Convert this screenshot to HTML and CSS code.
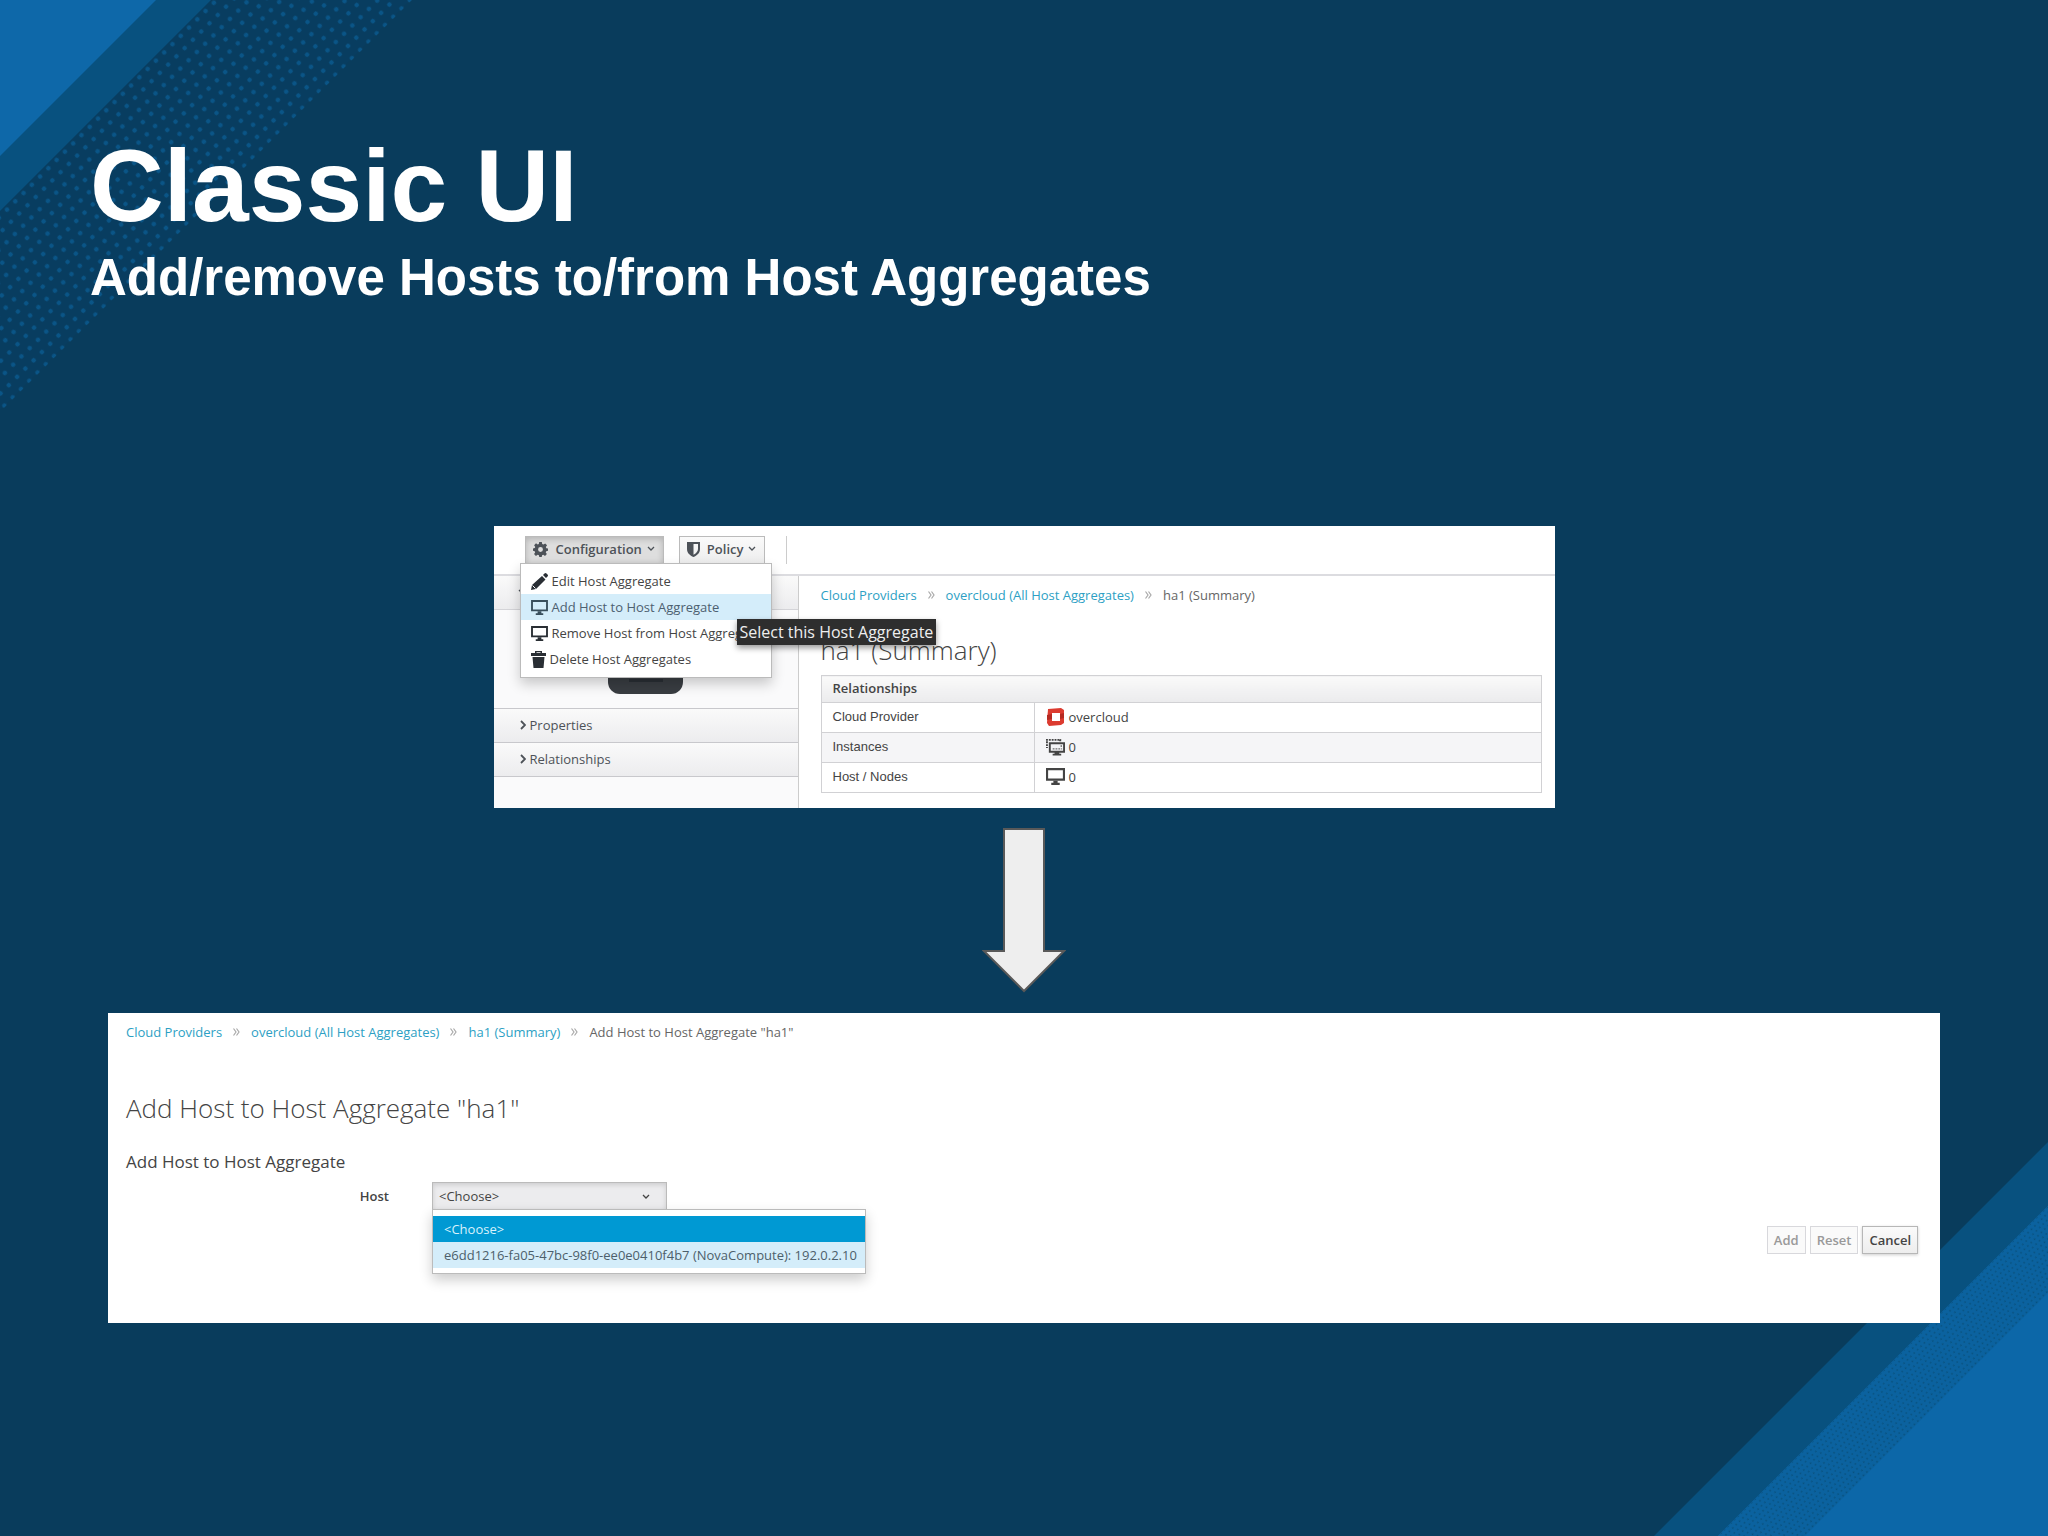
FILE: index.html
```html
<!DOCTYPE html>
<html lang="en">
<head>
<meta charset="utf-8">
<title>Classic UI</title>
<link rel="stylesheet" href="styles.css">
</head>
<body>
<svg class="defs" width="0" height="0" aria-hidden="true">
  <defs>
    <symbol id="screen" viewBox="0 0 18 16"><path fill-rule="evenodd" d="M0 0h18v12H0zM2 2v8h14V2z"/><path d="M7 12h4v2h2v2H5v-2h2z"/></symbol>
    <symbol id="down" viewBox="0 0 8 6"><path d="M1 1l3 3 3-3" fill="none" stroke="currentColor" stroke-width="1.3"/></symbol>
    <symbol id="right" viewBox="0 0 6 10"><path d="M1 1l4 4-4 4" fill="none" stroke="currentColor" stroke-width="1.8"/></symbol>
    <symbol id="sep" viewBox="0 0 7 8"><path d="M.5.5L3 4 .5 7.500M3.500.5L6 4 3.500 7.500" fill="none" stroke="currentColor" stroke-width="1.200"/></symbol>
  </defs>
</svg>
<main class="slide">
  <svg class="corner corner-top" width="420" height="420" viewBox="0 0 420 420" aria-hidden="true">
    <defs>
      <pattern id="dots" width="11.700" height="22.800" patternUnits="userSpaceOnUse" patternTransform="rotate(-45)">
        <circle cx="3" cy="5" r="2.300" fill="#0a5587"/>
        <circle cx="8.850" cy="16.400" r="2.300" fill="#0a5587"/>
      </pattern>
    </defs>
    <path d="M211 0H410L0 410V211z" fill="#083d60"/>
    <path d="M211 0H412L0 412V211z" fill="url(#dots)"/>
    <path d="M0 0H211L0 211z" fill="#08517f"/>
    <path d="M0 0H156L0 156z" fill="#0e68a9"/>
  </svg>
  <svg class="corner corner-bottom" width="394" height="394" viewBox="0 0 394 394" aria-hidden="true">
    <defs>
      <pattern id="grain" width="4.800" height="9.200" patternUnits="userSpaceOnUse" patternTransform="rotate(-45)">
        <circle cx="1.200" cy="2" r="0.900" fill="#08517f"/>
        <circle cx="3.600" cy="6.600" r="0.900" fill="#08517f"/>
      </pattern>
    </defs>
    <path d="M394 0V394H0z" fill="#08517f"/>
    <path d="M394 64V394H64z" fill="#0c67a8"/>
    <path d="M394 64V151L151 394H64z" fill="#0b629f"/>
    <path d="M394 64V151L151 394H64z" fill="url(#grain)"/>
  </svg>

  <header class="heading">
    <h1>Classic UI</h1>
    <p>Add/remove Hosts to/from Host Aggregates</p>
  </header>

  <section class="card summary">
    <div class="toolbar">
      <div class="menu-holder">
        <button class="tool tool-open" type="button">
          <svg width="15" height="15" viewBox="0 0 16 16" fill="currentColor"><path fill-rule="evenodd" d="M6.600 0h2.800l.4 2.200 1.300.5L13 1.500l2 2-1.300 1.800.5 1.300 1.800.2v2.600l-1.900.4-.5 1.300 1.200 1.800-2 2-1.800-1.200-1.300.5L9.300 16H6.700l-.4-1.900-1.300-.5-1.900 1.300-2-2 1.200-1.800-.5-1.300L0 9.400V6.800l1.900-.3.500-1.300L1.200 3.400l2-2L5 2.700l1.200-.5zM8 5.400a2.600 2.600 0 100 5.200 2.600 2.600 0 000-5.200z"/></svg>
          <span>Configuration</span>
          <svg width="8" height="6"><use href="#down"/></svg>
        </button>
        <ul class="menu">
          <li><button type="button"><svg width="17" height="17" viewBox="0 0 17 17"><path d="M11 3l3.500 3.500L5 16l-5 1 1-5zM12 2l1.500-1.500q1-1 2 0l1 1q1 1 0 2L15 5z"/><path d="M1.500 12.500l3 3" stroke="#fff" stroke-width="1"/></svg>Edit Host Aggregate</button></li>
          <li class="active"><button type="button"><svg width="17" height="15"><use href="#screen"/></svg>Add Host to Host Aggregate</button>
            <span class="tooltip" role="tooltip">Select this Host Aggregate</span></li>
          <li><button type="button"><svg width="17" height="15"><use href="#screen"/></svg>Remove Host from Host Aggregate</button></li>
          <li><button type="button"><svg width="15" height="17" viewBox="0 0 15 17"><path fill-rule="evenodd" d="M4 2V0h7v2h4v3H0V2zM5.500 1.200V2h4v-.8zM1.500 6h12l-1 11h-10z"/></svg>Delete Host Aggregates</button></li>
        </ul>
      </div>
      <button class="tool" type="button">
        <svg width="13" height="15" viewBox="0 0 13 15"><path fill="currentColor" fill-rule="evenodd" d="M0 0h13v7c0 4-3 6.500-6.500 8C3 13.500 0 11 0 7zM6.500 2v10.800C9 11.500 11 9.500 11 7V2z"/></svg>
        <span>Policy</span>
        <svg width="8" height="6"><use href="#down"/></svg>
      </button>
      <span class="divider"></span>
    </div>
    <div class="body">
      <aside class="side">
        <button class="fold" type="button" aria-label="Collapse"><svg width="8" height="6"><use href="#down"/></svg></button>
        <div class="quad"><span class="tile"></span></div>
        <button class="fold" type="button"><svg width="6" height="10"><use href="#right"/></svg>Properties</button>
        <button class="fold last" type="button"><svg width="6" height="10"><use href="#right"/></svg>Relationships</button>
      </aside>
      <div class="detail">
        <nav class="crumbs">
          <a href="#">Cloud Providers</a><svg width="7" height="8"><use href="#sep"/></svg>
          <a href="#">overcloud (All Host Aggregates)</a><svg width="7" height="8"><use href="#sep"/></svg>
          <span>ha1 (Summary)</span>
        </nav>
        <h2>ha1 (Summary)</h2>
        <table>
          <thead><tr><th colspan="2">Relationships</th></tr></thead>
          <tbody>
            <tr><td class="name">Cloud Provider</td><td><div class="value"><svg width="19" height="19" viewBox="0 0 19 19"><path d="M2 2l13-1 3 2v13l-3 2-12 1-2-3z" fill="#dc3b30"/><path d="M1 8l5-1v5l-5 1zM14 7l4-1v5l-4 1z" fill="#b52a22"/><path d="M6 6h8v8H6z" fill="#fff"/></svg>overcloud</div></td></tr>
            <tr class="odd"><td class="name">Instances</td><td><div class="value"><svg width="19" height="18" viewBox="0 0 20 18"><path d="M0 1.500h16M1 3v7M15 1v3" fill="none" stroke="currentColor" stroke-width="2" stroke-dasharray="2 1"/><path fill="currentColor" fill-rule="evenodd" d="M3 4h17v11h-6v1h2v2H7v-2h2v-1H3zM5 6v7h13V6z"/><path d="M7 11h10M16 7v3" stroke="currentColor" stroke-dasharray="2 1"/></svg>0</div></td></tr>
            <tr><td class="name">Host / Nodes</td><td><div class="value"><svg width="19" height="17" fill="currentColor"><use href="#screen"/></svg>0</div></td></tr>
          </tbody>
        </table>
      </div>
    </div>
  </section>

  <svg class="arrow" width="84" height="166" viewBox="0 0 84 166" aria-hidden="true"><path d="M22 1H62V123H82L42 163 2 123H22z" fill="#eee" stroke="#595959" stroke-width="2"/></svg>

  <section class="card editor">
    <nav class="crumbs">
      <a href="#">Cloud Providers</a><svg width="7" height="8"><use href="#sep"/></svg>
      <a href="#">overcloud (All Host Aggregates)</a><svg width="7" height="8"><use href="#sep"/></svg>
      <a href="#">ha1 (Summary)</a><svg width="7" height="8"><use href="#sep"/></svg>
      <span>Add Host to Host Aggregate "ha1"</span>
    </nav>
    <h2>Add Host to Host Aggregate "ha1"</h2>
    <h3>Add Host to Host Aggregate</h3>
    <form>
      <div class="field">
        <label for="host">Host</label>
        <div class="picker">
          <select id="host"><option>&lt;Choose&gt;</option></select>
          <svg class="picker-arrow" width="8" height="6"><use href="#down"/></svg>
          <ul class="options">
            <li class="chosen">&lt;Choose&gt;</li>
            <li class="hover">e6dd1216-fa05-47bc-98f0-ee0e0410f4b7 (NovaCompute): 192.0.2.10</li>
          </ul>
        </div>
      </div>
      <div class="actions">
        <button type="button" disabled>Add</button>
        <button type="button" disabled>Reset</button>
        <button type="button">Cancel</button>
      </div>
    </form>
  </section>
</main>
</body>
</html>
```
FILE: styles.css
```css
* { box-sizing: border-box; }
body { margin: 0; background: #093c5c; }
ul { list-style: none; margin: 0; padding: 0; }
button, select { font: inherit; color: inherit; margin: 0; }
svg { flex: none; display: block; }
.defs { position: absolute; }

.slide {
  position: relative;
  overflow: hidden;
  min-height: 100vh;
  display: flex;
  flex-direction: column;
  align-items: center;
  padding: 128px 108px 64px;
}
.corner { position: absolute; }
.corner-top { left: 0; top: 0; }
.corner-bottom { right: 0; bottom: 0; }

.heading {
  position: relative;
  align-self: stretch;
  margin: 0 0 218px -18px;
  color: #fff;
  font-family: "Liberation Sans", Arial, sans-serif;
  font-weight: bold;
}
.heading h1 { margin: 0; font-size: 102px; line-height: 116px; }
.heading p { margin: 4px 0 0; font-size: 51px; line-height: 60px; }

.card {
  position: relative;
  width: 100%;
  background: #fff;
  color: #444;
  font: 13px/18px "Open Sans", sans-serif;
}
.card h2 { margin: 0; font-size: 26px; line-height: 36px; font-weight: 300; }
.crumbs { display: flex; align-items: center; gap: 11px; color: #666; }
.crumbs a { color: #2d9fc4; text-decoration: none; }
.crumbs svg { color: #aaa; }

/* Summary card */
.summary { max-width: 1061px; }
.toolbar {
  display: flex;
  align-items: flex-start;
  gap: 15px;
  height: 50px;
  padding: 10px 31px 0;
  border-bottom: 2px solid #dcdce0;
}
.menu-holder { position: relative; }
.tool {
  display: flex;
  align-items: center;
  height: 28px;
  padding: 0 8px 2px 7px;
  border: 1px solid #bbb;
  background: linear-gradient(#fafafa, #ededed);
  font-weight: 600;
  color: #4d5258;
}
.tool span { margin: 0 5px 0 7px; }
.tool-open { background: #dedede; box-shadow: inset 0 2px 6px #0003; }
.tool-open span { margin-left: 8px; }
.divider { width: 1px; height: 28px; margin-left: 6px; background: #ccc; }

.menu {
  position: absolute;
  z-index: 2;
  left: -5px;
  top: 27px;
  width: 252px;
  padding: 4px 0 5px;
  border: 1px solid #bbb;
  background: #fff;
  box-shadow: 0 6px 12px #0003;
}
.menu li { position: relative; }
.menu button {
  display: flex;
  align-items: center;
  gap: 4px;
  width: 100%;
  height: 26px;
  padding: 0 0 0 10px;
  border: 0;
  background: none;
  white-space: nowrap;
  overflow: hidden;
}
.menu svg { fill: #292e34; }
.menu .active { background: #d4edfa; color: #4d6070; }
.menu .active svg { fill: #394f5c; }
.tooltip {
  position: absolute;
  z-index: 3;
  left: 216px;
  top: 25px;
  padding: 0 3px;
  background: #2e2e2e;
  box-shadow: 0 3px 6px #0006;
  color: #eee;
  font-size: 16px;
  line-height: 26px;
  white-space: nowrap;
}

.body { display: grid; grid-template-columns: 305px 1fr; }
.side { border-right: 1px solid #ccc; background: #fafafb; }
.fold {
  display: flex;
  align-items: center;
  gap: 4px;
  width: 100%;
  height: 34px;
  padding: 0 0 2px 26px;
  border: 0;
  border-top: 1px solid #c8c8cc;
  background: linear-gradient(#fafafa, #ececee);
  font-weight: 500;
  color: #4d5258;
}
.side .fold:first-child { padding-left: 24px; border-top: 0; border-bottom: 1px solid #d4d4d8; }
.fold.last { height: 35px; border-bottom: 1px solid #c8c8cc; }
.quad { display: flex; justify-content: center; height: 98px; padding-top: 9px; }
.tile {
  width: 75px;
  height: 75px;
  border-radius: 12px;
  background: linear-gradient(#292e34, #292e34) 50% 60px / 34px 3px no-repeat, #393d42;
}
.detail { padding: 10px 13px 15px 22px; }
.detail h2 { margin: 28px 0 7px; }

table { width: 100%; border-collapse: collapse; }
th, td { border: 1px solid #d1d1d4; padding: 0 11px 2px; }
th { height: 27px; text-align: left; font-weight: 600; background: linear-gradient(#fafafa, #ebebed); }
td { height: 30px; }
.name { width: 213px; font-family: "Liberation Sans", Arial, sans-serif; }
.odd { background: #f5f5f7; }
.value { display: flex; align-items: center; gap: 4px; }

.arrow { position: relative; margin: 20px 0 19px; }

/* Editor card */
.editor { padding: 10px 18px 69px; }
.editor h2 { margin: 49px 0 24px; }
.editor h3 { margin: 0; font-size: 17px; line-height: 24px; font-weight: 400; }
.field { display: grid; grid-template-columns: 263px 1fr; column-gap: 43px; align-items: center; margin-top: 8px; }
.field label { text-align: right; font-weight: 600; }
.picker { position: relative; width: 235px; }
.picker select {
  display: block;
  appearance: none;
  width: 100%;
  height: 28px;
  padding: 0 6px;
  border: 1px solid #bbb;
  border-radius: 0;
  background: #ececee;
  box-shadow: inset 0 2px 5px #0002;
  font-weight: 500;
}
.picker-arrow { position: absolute; right: 17px; top: 12px; }
.options {
  position: absolute;
  z-index: 1;
  left: 0;
  top: 27px;
  padding: 6px 0 5px;
  border: 1px solid #bbb;
  background: #fff;
  box-shadow: 0 6px 12px #0003;
  white-space: nowrap;
}
.options li { height: 26px; line-height: 26px; padding: 0 8px 0 11px; }
.options .chosen { background: #0099d3; color: #d9f2fc; }
.options .hover { background: #d4edfa; color: #4d5f6b; }
.actions { display: flex; justify-content: flex-end; gap: 4px; margin: 16px 4px 0 0; }
.actions button {
  height: 28px;
  padding: 0 6px;
  border: 1px solid #b7b7b7;
  background: linear-gradient(#fafafa, #ededed);
  box-shadow: 0 1px 3px #0003;
  font-weight: 600;
}
.actions button:disabled { border-color: #d8d8dc; background: #fafafa; color: #999; box-shadow: none; }
```
